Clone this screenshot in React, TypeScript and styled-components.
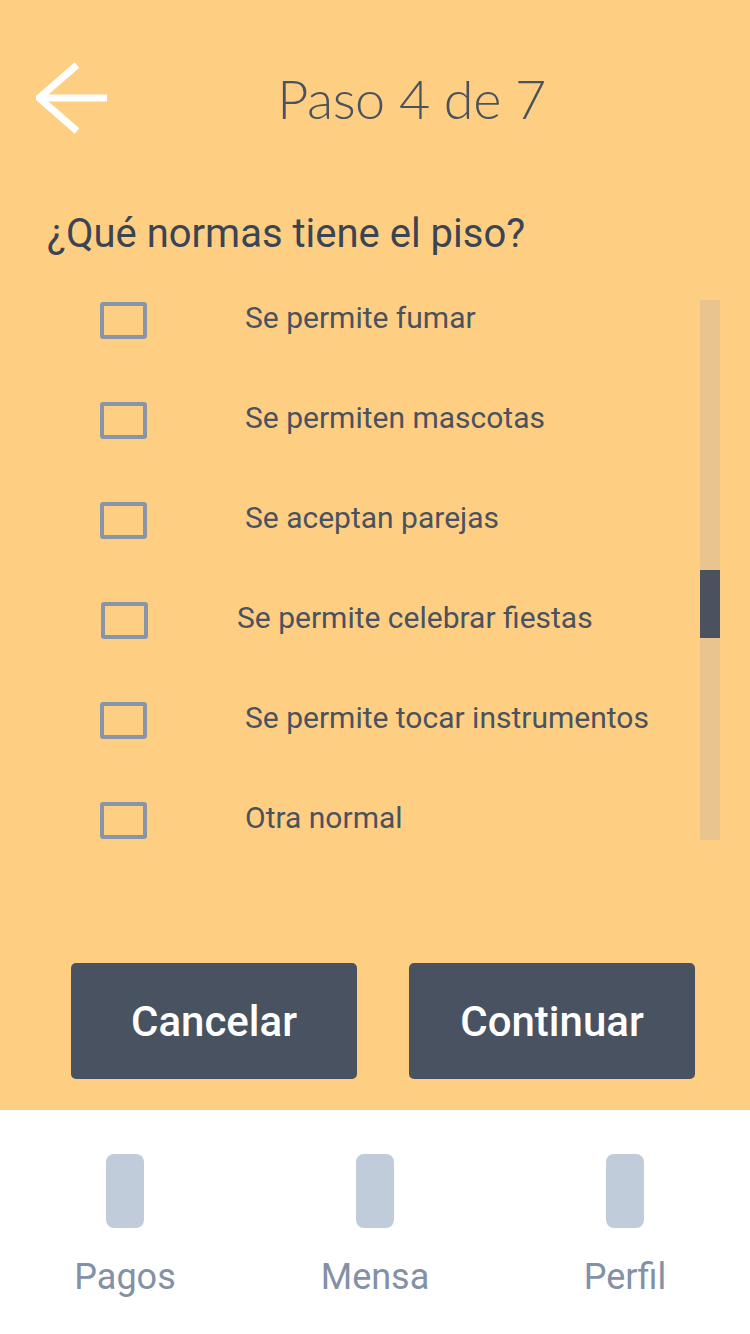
import React from "react";
import styled, { createGlobalStyle } from "styled-components";

const Global = createGlobalStyle`
  html, body { margin: 0; padding: 0; }
  body { width: 750px; height: 1334px; overflow: hidden; font-family: Roboto, "Liberation Sans", sans-serif; }
  * { box-sizing: border-box; }
`;

const Screen = styled.div`
  width: 750px;
  height: 1334px;
  display: flex;
  flex-direction: column;
`;

const Main = styled.div`
  height: 1110px;
  background: #fecf83;
  display: flex;
  flex-direction: column;
`;

const Header = styled.div`
  display: flex;
  align-items: center;
  height: 76px;
  margin-top: 60px;
  padding: 0 35px 0 36px;
`;

const BackButton = styled.div`
  width: 72px;
  height: 72px;
  display: flex;
  align-items: center;
`;

const Title = styled.h1`
  flex: 1;
  margin: 0;
  text-align: center;
  font-family: Lato, "Liberation Sans", sans-serif;
  font-weight: 300;
  font-size: 54px;
  color: #4a5260;
  letter-spacing: -0.5px;
`;

const Question = styled.h2`
  margin: 76px 0 0 47px;
  font-family: Roboto, "Liberation Sans", sans-serif;
  font-weight: 400;
  font-size: 40px;
  line-height: 44px;
  color: #3b4453;
`;

const ListArea = styled.div`
  display: flex;
  margin-top: 44px;
  height: 540px;
  padding-right: 30px;
`;

const List = styled.div`
  flex: 1;
  display: flex;
  flex-direction: column;
  gap: 62px;
  padding-top: 1px;
`;

const Row = styled.label<{ $shift?: number }>`
  display: flex;
  align-items: center;
  height: 38px;
  padding-left: ${(p) => 100 + (p.$shift ?? 0)}px;
`;

const Box = styled.span`
  width: 47px;
  height: 37px;
  border: 4px solid #8895a9;
  border-radius: 3px;
  flex-shrink: 0;
`;

const Label = styled.span<{ $gap?: number }>`
  margin-left: ${(p) => p.$gap ?? 98}px;
  padding-bottom: 5px;
  font-size: 30px;
  color: #4a5260;
  font-family: Roboto, "Liberation Sans", sans-serif;
`;

const Track = styled.div`
  width: 20px;
  height: 540px;
  background: #e8c48f;
  padding-top: 270px;
`;

const Thumb = styled.div`
  width: 20px;
  height: 68px;
  background: #4a5260;
`;

const Buttons = styled.div`
  margin-top: auto;
  margin-bottom: 31px;
  display: flex;
  gap: 52px;
  padding-left: 71px;
`;

const Button = styled.button`
  width: 286px;
  height: 116px;
  border: none;
  border-radius: 5px;
  background: #485260;
  color: #ffffff;
  font-family: Roboto, "Liberation Sans", sans-serif;
  font-weight: 500;
  font-size: 42px;
`;

const TabBar = styled.div`
  flex: 1;
  background: #ffffff;
  display: grid;
  grid-template-columns: repeat(3, 1fr);
  overflow: hidden;
`;

const Tab = styled.div`
  display: flex;
  flex-direction: column;
  align-items: center;
  padding-top: 44px;
`;

const TabIcon = styled.div`
  width: 38px;
  height: 74px;
  border-radius: 8px;
  background: #c0ccda;
`;

const TabLabel = styled.div`
  margin-top: 29px;
  font-family: Roboto, "Liberation Sans", sans-serif;
  font-size: 36px;
  line-height: 40px;
  color: #8391a6;
`;

const items: { text: string; shift?: number; gap?: number }[] = [
  { text: "Se permite fumar" },
  { text: "Se permiten mascotas" },
  { text: "Se aceptan parejas" },
  { text: "Se permite celebrar fiestas", shift: 1, gap: 89 },
  { text: "Se permite tocar instrumentos" },
  { text: "Otra normal" },
];

export default function App() {
  return (
    <Screen>
      <Global />
      <Main>
        <Header>
          <BackButton>
            <svg width="72" height="72" viewBox="0 0 72 72">
              <path d="M3 36 H71" stroke="#fff" strokeWidth="7" fill="none" />
              <path d="M41 3 L3 36 L41 69" stroke="#fff" strokeWidth="7" fill="none" strokeLinejoin="miter" />
            </svg>
          </BackButton>
          <Title>Paso 4 de 7</Title>
        </Header>
        <Question>¿Qué normas tiene el piso?</Question>
        <ListArea>
          <List>
            {items.map((it) => (
              <Row key={it.text} $shift={it.shift}>
                <Box />
                <Label $gap={it.gap}>{it.text}</Label>
              </Row>
            ))}
          </List>
          <Track>
            <Thumb />
          </Track>
        </ListArea>
        <Buttons>
          <Button>Cancelar</Button>
          <Button>Continuar</Button>
        </Buttons>
      </Main>
      <TabBar>
        <Tab>
          <TabIcon />
          <TabLabel>Pagos</TabLabel>
        </Tab>
        <Tab>
          <TabIcon />
          <TabLabel>Mensa</TabLabel>
        </Tab>
        <Tab>
          <TabIcon />
          <TabLabel>Perfil</TabLabel>
        </Tab>
      </TabBar>
    </Screen>
  );
}
